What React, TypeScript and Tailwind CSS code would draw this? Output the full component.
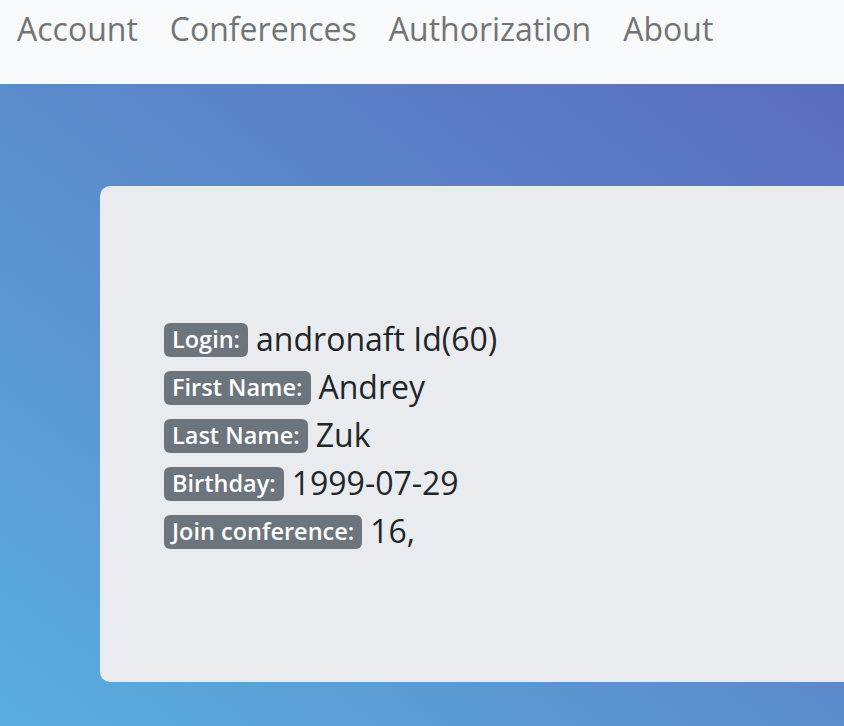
export default function App() {
  const rows: [string, string][] = [
    ["Login:", "andronaft Id(60)"],
    ["First Name:", "Andrey"],
    ["Last Name:", "Zuk"],
    ["Birthday:", "1999-07-29"],
    ["Join conference:", "16,"],
  ];

  return (
    <div className="flex flex-col h-[726px] w-[844px] overflow-hidden font-['Open_Sans',sans-serif]">
      {/* nav */}
      <nav className="h-[84px] shrink-0 bg-[#f8f9fa] flex items-start pt-[5px] pl-[17px] gap-[32px] text-[32px] text-[#737475]">
        <span>Account</span>
        <span>Conferences</span>
        <span>Authorization</span>
        <span>About</span>
      </nav>

      {/* main */}
      <div className="flex-1 bg-[linear-gradient(to_top_right,#5aaedd_0%,#5b8fcd_45%,#5a6cbe_100%)] pt-[102px] pl-[100px]">
        <div className="h-[496px] w-[800px] bg-[#e9ebef] rounded-l-[10px] pt-[137px] pl-[64px] flex flex-col gap-[14px]">
          {rows.map(([k, v]) => (
            <div key={k} className="flex items-center gap-[8px] h-[34px]">
              <span className="bg-[#6c757d] text-white rounded-[6px] px-[8px] h-[34px] flex items-center text-[23.5px] font-semibold">
                {k}
              </span>
              <span className="text-[32px] text-[#212529] leading-none -mt-[2px]">{v}</span>
            </div>
          ))}
        </div>
      </div>
    </div>
  );
}
